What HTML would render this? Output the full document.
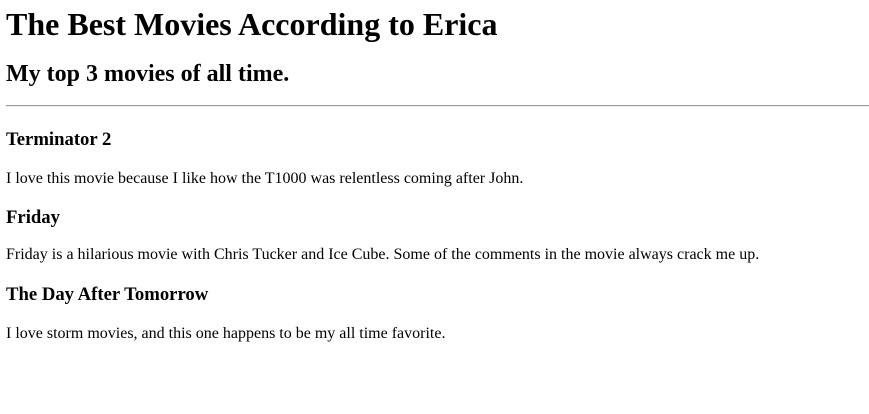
<!DOCTYPE html>
<html><head><style>
body{margin:6px;font-family:"Liberation Serif",serif;color:#000;background:#fff;width:863px;}
h1{font-size:32px;margin:0 0 0 0;line-height:37px;}
h2{font-size:24px;margin:17px 0 0 0;line-height:28px;}
hr{margin:17px 0 0 0;border:none;border-top:1px solid #999;border-bottom:1px solid #eee;}
h3{font-size:18.7px;margin:19px 0 0 0;line-height:22px;}
p{font-size:16px;margin:17px 0 0 0;line-height:20px;}
</style></head><body>
<h1>The Best Movies According to Erica</h1>
<h2>My top 3 movies of all time.</h2>
<hr>
<h3 style="margin-top:22px">Terminator 2</h3>
<p style="margin-top:18px">I love this movie because I like how the T1000 was relentless coming after John.</p>
<h3 style="margin-top:18px">Friday</h3>
<p style="margin-top:16px">Friday is a hilarious movie with Chris Tucker and Ice Cube. Some of the comments in the movie always crack me up.</p>
<h3 style="margin-top:19px">The Day After Tomorrow</h3>
<p style="margin-top:18px">I love storm movies, and this one happens to be my all time favorite.</p>
</body></html>
